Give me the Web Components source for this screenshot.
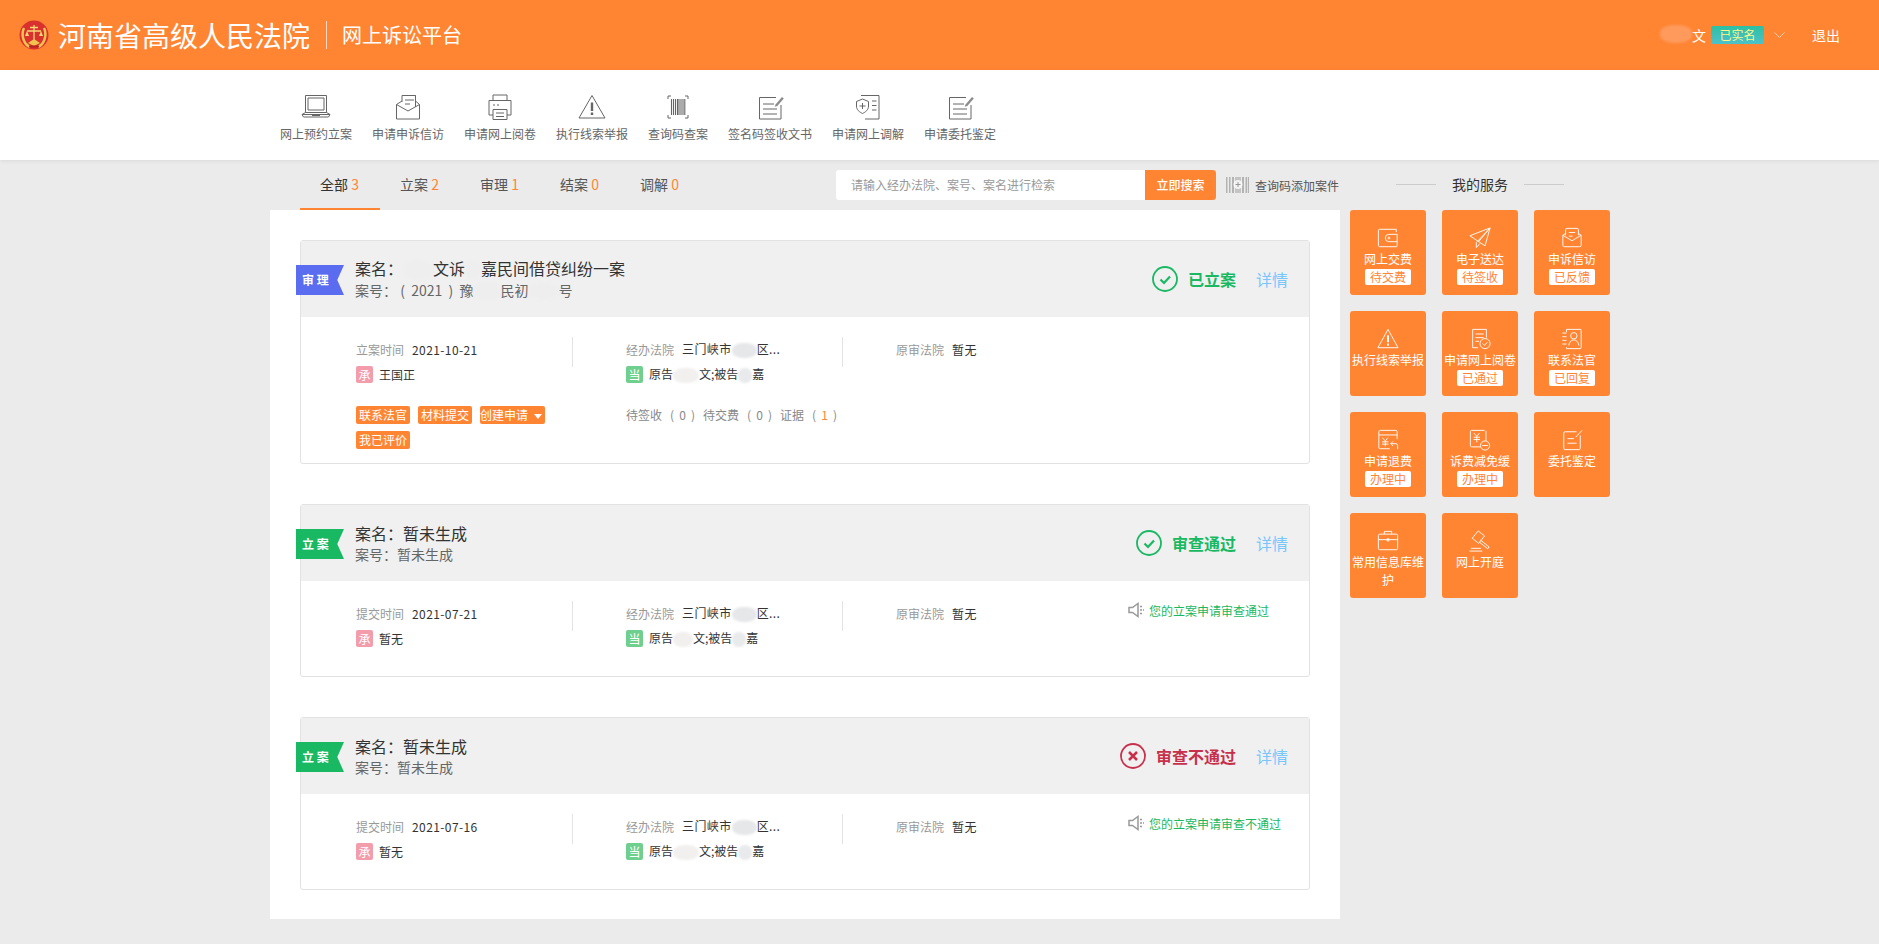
<!DOCTYPE html>
<html lang="zh">
<head>
<meta charset="utf-8">
<title>网上诉讼平台</title>
<style>
html,body{margin:0;background:#ebebeb;}
body{font-family:"Noto Sans CJK SC","Liberation Sans",sans-serif;font-size:12px;color:#333;}
</style>
</head>
<body>
<court-app></court-app>
<script>
const FONT = '"Noto Sans CJK SC","Liberation Sans",sans-serif';
const ORANGE = '#ff8533';

// every icon is drawn on the viewBox given first, with currentColor strokes
const ICONS = {
  laptop: ['0 0 30 26','<path d="M4.500 1.500h21v17h-21zM7 4h16v12H7z"/><path d="M1 20.500h28l-1.500 2.500H2.500zM4.500 18.500 1 20.500M25.500 18.500 29 20.500"/><path d="M11 21.200h8" stroke-width="1.600"/>'],
  letter: ['0 0 30 26','<path d="M9 8V1.500h13.500V13M22.500 1.500V8"/><path d="M12 6h9M12 10h5"/><path d="M9 7 3.500 10.500V25h23V10.500L22.500 7M3.500 10.500 15 17l11.500-6.500"/>'],
  printer: ['0 0 30 26','<path d="M8 6.500V1h14v5.500"/><path d="M8 21H4V6.500h22V21h-4"/><path d="M8 15.500h14V25.500H8zM11 19h8M11 22.500h8M8 11h2M12 11h2"/>'],
  warning: ['0 0 30 26','<path d="M15 1.500 28 24H2z" stroke-linejoin="miter"/><path d="M15 8.500v8.500" stroke-width="2.400"/><path d="M15 18.500v2.500" stroke-width="2.400"/>'],
  barcode: ['0 0 30 26','<path d="M5 5V2h3M22 2h3v3M25 21v3h-3M8 24H5v-3"/><path d="M8.500 5v16M10.500 5v16M12.500 5v16M14.500 5v16M16 5v16M18 5v16M20 5v16M21.800 5v16" stroke-width="1.100"/>'],
  sign: ['0 0 30 26','<path d="M21 3.500H4.500V25H26V11"/><path d="M8 10h11M8 15h14M8 20h14"/><path d="M20.500 10.500 27 3l1.800 1.600-6.500 7.500-2.500.600z" fill="currentColor" stroke="none" opacity=".75"/>'],
  mediate: ['0 0 30 26','<path d="M8 1.500h18V25H12"/><path d="M19 7h4.500M19 11.500h4.500M19 16h4.500"/><path d="M9.500 5 15.500 7.500V12c0 4-3 6-6 7.500-3-1.500-6-3.500-6-7.500V7.500z" fill="#fff"/><path d="M6.500 12h6M9.500 9v6"/>'],
  wallet: ['0 0 24 24','<path d="M21 5.500V2.500H3a1.500 1.500 0 0 0-1.500 1.500v16A1.500 1.500 0 0 0 3 21.500h18a1 1 0 0 0 1-1V16"/><path d="M22 8v8h-9a4 4 0 0 1 0-8z"/><circle cx="13" cy="12" r="1"/>'],
  plane: ['0 0 24 24','<path d="M1 9.500 23 1 17.500 20.500 10.500 16z"/><path d="M23 1 8 17v5.500l4-4.500M23 1 10.500 16"/>'],
  inbox: ['0 0 24 24','<path d="M5 9V3a1.500 1.500 0 0 1 1.500-1.500h11A1.500 1.500 0 0 1 19 3v6"/><path d="M8.500 6h7M8.500 10h4"/><path d="M5 7 2 9v11a1.500 1.500 0 0 0 1.500 1.500h17A1.500 1.500 0 0 0 22 20V9l-3-2M2 9l10 6 10-6"/>'],
  alert: ['0 0 24 24','<path d="M12 1.500 23 21.500H1z"/><path d="M12 8v7.500" stroke-width="2.200"/><path d="M12 17v2.200" stroke-width="2.200"/>'],
  review: ['0 0 24 24','<path d="M10 21.500H4V1.500h15v9"/><path d="M7 6.500h9M7 10.500h9M7 14.500h4"/><circle cx="17.500" cy="17" r="5.500"/><path d="M15 17l2 2 3-3.500"/>'],
  judge: ['0 0 24 24','<path d="M6 1.500h15a1 1 0 0 1 1 1v19a1 1 0 0 1-1 1H6M6 1.500v3M6 21v1.500"/><path d="M1.500 5.500H6M1.500 9.500H6M1.500 13.500H6M1.500 17.500H6"/><circle cx="14" cy="8.500" r="3.500"/><path d="M8.500 19c.5-3.500 2.500-6 5.500-6s5 2.500 5.500 6"/>'],
  refund: ['0 0 24 24','<path d="M22 11V3a1.500 1.500 0 0 0-1.500-1.500h-17A1.500 1.500 0 0 0 2 3v17a1.500 1.500 0 0 0 1.500 1.500H14"/><path d="M2 6.500h20"/><path d="M6 9.500l3 3.500 3-3.500M9 13v6M5.500 14h7M5.500 16.500h7"/><path d="M22.500 22v-4a2 2 0 0 0-2-2H15M17.500 13.500 15 16l2.500 2.500"/>'],
  reduce: ['0 0 24 24','<path d="M17 1.500H3A1.500 1.500 0 0 0 1.500 3v15A1.500 1.500 0 0 0 3 19.500h9M18.500 13V2"/><path d="M5.500 4.500l3 3.500 3-3.500M8.500 8v6.500M5 9h7M5 11.500h7"/><circle cx="17.500" cy="18" r="5"/><path d="M14.500 18h6"/>'],
  entrust: ['0 0 24 24','<path d="M17 3H4.500A1.500 1.500 0 0 0 3 4.500V21a1.500 1.500 0 0 0 1.500 1.500h15A1.500 1.500 0 0 0 21 21V7"/><path d="M7 10.500h7M7 15.500h10M16 9l7-7.500"/>'],
  bag: ['0 0 24 24','<rect x="1.500" y="4.500" width="21" height="17" rx="1.500"/><path d="M8 4.500V1.500h8v3M1.500 10.500h21"/><path d="M11 9.500h2v2.500h-2z"/>'],
  gavel: ['0 0 24 24','<path d="M10 1 3.500 9l7 5.500L17 6.500z"/><path d="M12.500 11 22 18.500l-1.500 2-9.500-7.500"/><path d="M2 20h11M0.500 23h14"/>']
};

function icon(name,w,h){
  const d = ICONS[name];
  return `<svg width="${w}" height="${h}" viewBox="${d[0]}" fill="none" stroke="currentColor" stroke-width="1" stroke-linejoin="round">${d[1]}</svg>`;
}

// the smudges that hide names on the screenshot
class SmudgeMark extends HTMLElement{
  constructor(){
    super();
    this.attachShadow({mode:"open"});
  }
  connectedCallback(){
    const w = this.getAttribute("w") || 24;
    const c = this.getAttribute("c") || "#eeeeee";
    this.shadowRoot.innerHTML = `
    <style>
    :host{display:inline-block;vertical-align:middle;height:1.25em;width:${w}px;margin-top:-2px;}
    div{height:100%;background:${c};border-radius:45%;filter:blur(1px);}
    </style>
    <div></div>`;
  }
}
customElements.define("smudge-mark",SmudgeMark);

class CourtHeader extends HTMLElement{
  constructor(){
    super();
    this.attachShadow({mode:"open"});
  }
  connectedCallback(){
    this.shadowRoot.innerHTML = `
    <style>
    :host{display:flex;align-items:center;height:70px;background:${ORANGE};color:#fff;padding:0 39px 0 19px;font-family:${FONT};}
    .logo{width:30px;height:30px;flex:none;margin-right:9px;}
    h1{margin:0;font-size:28px;font-weight:400;line-height:36px;white-space:nowrap;}
    i{display:block;width:1px;height:28px;background:#ffd9bf;margin:0 15px 0 16px;}
    .sub{font-size:20px;line-height:28px;}
    .user{margin-left:auto;display:flex;align-items:center;font-size:14px;}
    .badge{margin-left:5px;width:53px;height:18px;line-height:18px;font-size:12px;text-align:center;color:#fff68f;border-radius:2px;background:linear-gradient(#2cc0a2,#4ec1c9);}
    .chev{margin:0 27px 0 10px;display:block;color:#ffd2b3;}
    </style>
    <svg class="logo" viewBox="0 0 30 30">
      <circle cx="15" cy="15" r="14.500" fill="#d9312e"/>
      <path d="M5 8C2 14 4 24 11 27M25 8c3 6 1 16-6 19" fill="none" stroke="#f0c24e" stroke-width="2.500"/>
      <path d="M15 5v15M11 7.500h8M8 11h14" stroke="#f6d774" stroke-width="1.300" fill="none"/>
      <path d="M8 11l-2 5h4zM22 11l-2 5h4z" fill="#f6d774"/>
      <path d="M9 23l6-4 6 4-6 3z" fill="#f0c24e"/>
      <path d="M10 26.500h10" stroke="#b5241f" stroke-width="2"/>
    </svg>
    <h1>河南省高级人民法院</h1>
    <i></i>
    <span class="sub">网上诉讼平台</span>
    <div class="user">
      <smudge-mark w="32" c="#ff9a5c"></smudge-mark><span>文</span>
      <span class="badge">已实名</span>
      <svg class="chev" width="11" height="6" viewBox="0 0 11 6" fill="none" stroke="currentColor"><path d="M.5.500l5 5 5-5"/></svg>
      <span>退出</span>
    </div>`;
  }
}
customElements.define("court-header",CourtHeader);

class NavItem extends HTMLElement{
  constructor(){
    super();
    this.attachShadow({mode:"open"});
  }
  connectedCallback(){
    this.shadowRoot.innerHTML = `
    <style>
    :host{display:flex;flex-direction:column;align-items:center;color:#666;}
    svg{display:block;}
    span{margin-top:6px;font-size:12px;line-height:16px;white-space:nowrap;color:#666;}
    </style>
    ${icon(this.getAttribute("icon"),30,26)}
    <span><slot></slot></span>`;
  }
}
customElements.define("nav-item",NavItem);

class QuickNav extends HTMLElement{
  constructor(){
    super();
    this.attachShadow({mode:"open"});
  }
  connectedCallback(){
    this.shadowRoot.innerHTML = `
    <style>
    :host{display:flex;gap:20px;height:66px;padding:24px 0 0 280px;background:#fff;box-shadow:0 1px 4px rgba(0,0,0,.08);position:relative;font-family:${FONT};}
    </style>
    <nav-item icon="laptop">网上预约立案</nav-item>
    <nav-item icon="letter">申请申诉信访</nav-item>
    <nav-item icon="printer">申请网上阅卷</nav-item>
    <nav-item icon="warning">执行线索举报</nav-item>
    <nav-item icon="barcode">查询码查案</nav-item>
    <nav-item icon="sign">签名码签收文书</nav-item>
    <nav-item icon="mediate">申请网上调解</nav-item>
    <nav-item icon="sign">申请委托鉴定</nav-item>`;
  }
}
customElements.define("quick-nav",QuickNav);

class CaseToolbar extends HTMLElement{
  constructor(){
    super();
    this.attachShadow({mode:"open"});
  }
  connectedCallback(){
    const tabs = [["全部",3],["立案",2],["审理",1],["结案",0],["调解",0]];
    this.shadowRoot.innerHTML = `
    <style>
    :host{display:flex;align-items:flex-start;height:50px;padding-left:30px;font-family:${FONT};}
    .tab{box-sizing:border-box;width:80px;height:50px;padding-left:20px;font-size:14px;line-height:49px;color:#555;white-space:nowrap;}
    .tab b{font-weight:400;color:${ORANGE};}
    .tab.on{color:#333;border-bottom:2px solid ${ORANGE};}
    .search{margin:10px 0 0 136px;width:380px;height:30px;display:flex;background:#fff;border-radius:3px;overflow:hidden;}
    .search span{flex:1;padding-left:15px;font-size:12px;line-height:29px;color:#999;}
    .search button{width:71px;border:0;padding:0;background:${ORANGE};color:#fff;font:500 12px/30px ${FONT};}
    .code{margin:10px 0 0 10px;display:flex;align-items:center;height:30px;font-size:12px;color:#555;white-space:nowrap;}
    .code svg{margin-right:6px;}
    </style>
    ${tabs.map((t,i)=>`<div class="tab ${i==0?"on":""}">${t[0]} <b>${t[1]}</b></div>`).join("")}
    <div class="search"><span>请输入经办法院、案号、案名进行检索</span><button>立即搜索</button></div>
    <div class="code">
      <svg width="23" height="16" viewBox="0 0 23 16"><path d="M0 0h1.500v16H0zM3 0h1.500v16H3zM6 0h2v16H6zM16 0h2v16h-2zM19.500 0H21v16h-1.500zM21.800 0H23v16h-1.200z" fill="#b3b3b3"/><path d="M9 0h6v16H9z" fill="#c4c4c4"/><circle cx="12" cy="7.500" r="4.500" fill="#fff" opacity=".8"/><path d="M9.500 7.500h5M12 5v5" stroke="#999"/></svg>
      查询码添加案件
    </div>`;
  }
}
customElements.define("case-toolbar",CaseToolbar);

class CaseCard extends HTMLElement{
  constructor(){
    super();
    this.attachShadow({mode:"open"});
  }
  connectedCallback(){
    const kind = this.getAttribute("kind");
    const fail = this.getAttribute("state") == "fail";
    const color = fail ? "#c7304b" : "#19b862";
    const mark = fail
      ? `<path d="M9 9l8 8M17 9l-8 8" stroke-width="2.500"/>`
      : `<path d="M8.500 13.500l3.500 3.500 6-6.500" stroke-width="2.200"/>`;
    const ribbon = kind == "审 理" ? "#5a6df0" : "#19b862";
    this.shadowRoot.innerHTML = `
    <style>
    :host{display:block;position:relative;box-sizing:border-box;border:1px solid #e2e2e2;border-radius:3px;background:#fff;font-family:${FONT};}
    .ribbon{position:absolute;left:-5px;top:24px;width:48px;height:30px;box-sizing:border-box;padding-left:6px;line-height:30px;font-size:12px;font-weight:700;color:#fff;white-space:pre;background:${ribbon};clip-path:polygon(0 0,100% 0,86% 50%,100% 100%,0 100%);}
    .head{height:76px;background:#f0f0f0;display:flex;align-items:center;padding:0 21px 0 54px;}
    .names{flex:1;min-width:0;}
    .names div{white-space:nowrap;}
    .name{font-size:16px;line-height:21px;color:#333;}
    .no{font-size:14px;line-height:20px;color:#666;}
    .state{display:flex;align-items:center;font-size:16px;font-weight:700;color:${color};white-space:nowrap;}
    .state svg{margin-right:10px;display:block;}
    .more{margin-left:20px;font-size:16px;color:#79c6fb;}
    .body{padding:20px 0 23px 55px;}
    .grid{display:grid;grid-template-columns:270px 270px 232px auto;}
    </style>
    <div class="ribbon">${kind}</div>
    <div class="head">
      <div class="names">
        <div class="name"><slot name="name"></slot></div>
        <div class="no"><slot name="no"></slot></div>
      </div>
      <div class="state">
        <svg width="26" height="26" viewBox="0 0 26 26" fill="none" stroke="${color}" stroke-width="1.800"><circle cx="13" cy="13" r="12"/>${mark}</svg>
        ${this.getAttribute("state-text")}
      </div>
      <div class="more">详情</div>
    </div>
    <div class="body">
      <div class="grid"><slot name="info"></slot></div>
      <slot name="extra"></slot>
    </div>`;
  }
}
customElements.define("case-card",CaseCard);

// one of the label + value + badge columns in a card
class CaseInfo extends HTMLElement{
  constructor(){
    super();
    this.attachShadow({mode:"open"});
  }
  connectedCallback(){
    const label = this.getAttribute("label");
    const badge = this.getAttribute("badge");
    const line = !this.hasAttribute("last");
    const bc = badge == "承" ? "#f39cac" : "#6fcf8f";
    this.shadowRoot.innerHTML = `
    <style>
    :host{display:block;font-family:${FONT};font-size:12px;color:#333;}
    .box{width:217px;height:52px;${line?"background:linear-gradient(#e3e3e3,#e3e3e3) right top/1px 30px no-repeat;":""}}
    .row{display:flex;align-items:center;height:26px;white-space:nowrap;}
    .row:first-child{height:24px;}
    .row span.l{color:#999;margin-right:8px;}
    .num{letter-spacing:.4px;}
    .b{width:17px;height:17px;line-height:17px;border-radius:2px;text-align:center;color:#fff;background:${bc};margin-right:6px;flex:none;}
    </style>
    <div class="box">
      <div class="row"><span class="l">${label}</span><span class="num"><slot></slot></span></div>
      ${badge?`<div class="row"><span class="b">${badge}</span><span><slot name="person"></slot></span></div>`:""}
    </div>`;
  }
}
customElements.define("case-info",CaseInfo);

class CaseNotice extends HTMLElement{
  constructor(){
    super();
    this.attachShadow({mode:"open"});
  }
  connectedCallback(){
    this.shadowRoot.innerHTML = `
    <style>
    :host{display:flex;align-items:center;height:22px;margin-top:-2px;font-family:${FONT};font-size:12px;color:#19b862;white-space:nowrap;}
    svg{margin-right:4px;display:block;}
    </style>
    <svg width="17" height="16" viewBox="0 0 17 16" fill="none" stroke="#999" stroke-width="1.500"><path d="M1 5.500h3.500L10 1.500v13l-5.500-4H1z"/><path d="M12 4.500h2.500M12 8h4M12 11.500h2.500" stroke-dasharray="2 1"/></svg>
    <slot></slot>`;
  }
}
customElements.define("case-notice",CaseNotice);

class CaseExtra extends HTMLElement{
  constructor(){
    super();
    this.attachShadow({mode:"open"});
  }
  connectedCallback(){
    const group = (n,hot)=>`<span class="p"><span>(</span><span class="${hot?"hot":""}">${n}</span><span>)</span></span>`;
    this.shadowRoot.innerHTML = `
    <style>
    :host{display:grid;grid-template-columns:270px auto;margin:17px 0 -9px;font-family:${FONT};font-size:12px;}
    .tags{width:217px;display:flex;flex-wrap:wrap;gap:7px 8px;}
    .tag{height:18px;line-height:18px;padding:0 3px;border-radius:2px;background:${ORANGE};color:#fff;white-space:nowrap;display:flex;align-items:center;}
    .tag.drop{padding:0;}
    .tag em{display:block;margin:2px 3px 0 6px;border:4px solid transparent;border-top:5px solid #fff;border-bottom:0;}
    .count{height:18px;line-height:18px;color:#888;white-space:nowrap;display:flex;}
    .p{display:flex;justify-content:space-between;width:25px;margin:0 8px;}
    .hot{color:${ORANGE};}
    </style>
    <div class="tags">
      <span class="tag">联系法官</span>
      <span class="tag">材料提交</span>
      <span class="tag drop">创建申请<em></em></span>
      <span class="tag">我已评价</span>
    </div>
    <div class="count">待签收${group(0)}待交费${group(0)}证据${group(1,true)}</div>`;
  }
}
customElements.define("case-extra",CaseExtra);

class ServiceTile extends HTMLElement{
  constructor(){
    super();
    this.attachShadow({mode:"open"});
  }
  connectedCallback(){
    const tag = this.getAttribute("tag");
    this.shadowRoot.innerHTML = `
    <style>
    :host{display:block;box-sizing:border-box;height:85px;padding-top:17px;background:${ORANGE};border-radius:3px;color:#fff;text-align:center;font-family:${FONT};font-size:12px;}
    svg{display:block;margin:0 auto 1px;}
    .t{line-height:18px;}
    .tag{display:block;width:46px;height:16px;line-height:16px;margin:1px auto 0;background:#fff;border-radius:2px;color:${ORANGE};}
    </style>
    ${icon(this.getAttribute("icon"),22,22)}
    <div class="t"><slot></slot></div>
    ${tag?`<span class="tag">${tag}</span>`:""}`;
  }
}
customElements.define("service-tile",ServiceTile);

class ServicePanel extends HTMLElement{
  constructor(){
    super();
    this.attachShadow({mode:"open"});
  }
  connectedCallback(){
    this.shadowRoot.innerHTML = `
    <style>
    :host{display:block;width:260px;font-family:${FONT};}
    .title{height:50px;padding-bottom:2px;box-sizing:border-box;display:flex;align-items:center;justify-content:center;gap:16px;font-size:14px;color:#333;}
    .title i{display:block;width:40px;height:1px;background:#ccc;}
    .grid{display:grid;grid-template-columns:repeat(3,76px);gap:16px;}
    </style>
    <div class="title"><i></i><span>我的服务</span><i></i></div>
    <div class="grid">
      <service-tile icon="wallet" tag="待交费">网上交费</service-tile>
      <service-tile icon="plane" tag="待签收">电子送达</service-tile>
      <service-tile icon="inbox" tag="已反馈">申诉信访</service-tile>
      <service-tile icon="alert">执行线索举报</service-tile>
      <service-tile icon="review" tag="已通过">申请网上阅卷</service-tile>
      <service-tile icon="judge" tag="已回复">联系法官</service-tile>
      <service-tile icon="refund" tag="办理中">申请退费</service-tile>
      <service-tile icon="reduce" tag="办理中">诉费减免缓</service-tile>
      <service-tile icon="entrust">委托鉴定</service-tile>
      <service-tile icon="bag">常用信息库维护</service-tile>
      <service-tile icon="gavel">网上开庭</service-tile>
    </div>`;
  }
}
customElements.define("service-panel",ServicePanel);

class CourtApp extends HTMLElement{
  constructor(){
    super();
    this.attachShadow({mode:"open"});
  }
  connectedCallback(){
    const court = `<span>三门峡市<smudge-mark w="25" c="#e6e7e9"></smudge-mark>区...</span>`;
    const party = (a,b)=>`<span slot="person">原告<smudge-mark w="${a}" c="#f1f0ee"></smudge-mark>文;被告<smudge-mark w="${b}" c="#e8eaec"></smudge-mark>嘉</span>`;
    const colon = `<span class="c">：</span>`;
    this.shadowRoot.innerHTML = `
    <style>
    :host{display:block;font-family:${FONT};}
    main{display:flex;padding-left:270px;gap:10px;}
    .left{width:1070px;flex:none;}
    .panel{background:#fff;padding:30px 30px 29px;display:flex;flex-direction:column;gap:40px;}
    .c{font-family:"Noto Sans CJK TC",sans-serif;}
    </style>
    <court-header></court-header>
    <quick-nav></quick-nav>
    <main>
      <div class="left">
        <case-toolbar></case-toolbar>
        <div class="panel">
          <case-card kind="审 理" state-text="已立案">
            <span slot="name">案名${colon}<smudge-mark w="30"></smudge-mark>文诉<smudge-mark w="16"></smudge-mark>嘉民间借贷纠纷一案</span>
            <span slot="no">案号${colon}&nbsp;( &nbsp;2021&nbsp; ) &nbsp;豫<smudge-mark w="27"></smudge-mark>民初<smudge-mark w="30"></smudge-mark>号</span>
            <case-info slot="info" label="立案时间" badge="承">2021-10-21<span slot="person">王国正</span></case-info>
            <case-info slot="info" label="经办法院" badge="当">${court}${party(26,14)}</case-info>
            <case-info slot="info" label="原审法院" last>暂无</case-info>
            <case-extra slot="extra"></case-extra>
          </case-card>
          <case-card kind="立 案" state-text="审查通过">
            <span slot="name">案名${colon}暂未生成</span>
            <span slot="no">案号${colon}暂未生成</span>
            <case-info slot="info" label="提交时间" badge="承">2021-07-21<span slot="person">暂无</span></case-info>
            <case-info slot="info" label="经办法院" badge="当">${court}${party(20,14)}</case-info>
            <case-info slot="info" label="原审法院" last>暂无</case-info>
            <case-notice slot="info">您的立案申请审查通过</case-notice>
          </case-card>
          <case-card kind="立 案" state="fail" state-text="审查不通过">
            <span slot="name">案名${colon}暂未生成</span>
            <span slot="no">案号${colon}暂未生成</span>
            <case-info slot="info" label="提交时间" badge="承">2021-07-16<span slot="person">暂无</span></case-info>
            <case-info slot="info" label="经办法院" badge="当">${court}${party(26,14)}</case-info>
            <case-info slot="info" label="原审法院" last>暂无</case-info>
            <case-notice slot="info">您的立案申请审查不通过</case-notice>
          </case-card>
        </div>
      </div>
      <service-panel></service-panel>
    </main>`;
  }
}
customElements.define("court-app",CourtApp);
</script>
</body>
</html>
